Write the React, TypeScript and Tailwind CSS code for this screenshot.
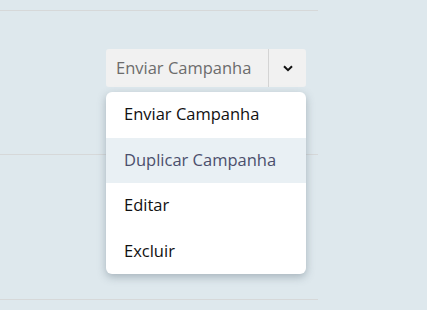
// Campaign actions dropdown — open state

const items = ['Enviar Campanha', 'Duplicar Campanha', 'Editar', 'Excluir'];

export default function App() {
  return (
    <div
      className="w-[427px] h-[310px] bg-[#dee8ed] overflow-hidden"
      style={{ fontFamily: '"Open Sans", "Noto Sans", sans-serif' }}
    >
      <div className="w-[318px] h-px bg-[#d6d8d9] mt-[10px]" />

      <div className="h-[143px] pt-[38px] pl-[106px]">
        <div className="relative w-[200px]">
          <div className="flex h-[38px] bg-[#f1f1f1] rounded-[3px]">
            <div className="flex-1 flex items-center pl-[10px] text-[16.5px] text-[#6c6c6c] border-r border-[#d4d4d4]">
              Enviar Campanha
            </div>
            <div className="w-[37px] flex items-center justify-center">
              <svg width="10" height="7" viewBox="0 0 10 7" fill="none">
                <path d="M1 1.2 L5 5.2 L9 1.2" stroke="#111" strokeWidth="2" />
              </svg>
            </div>
          </div>

          <ul className="absolute left-0 top-[43px] w-[200px] bg-white rounded-[6px] shadow-[0_3px_8px_rgba(60,80,95,0.35)] overflow-hidden z-10">
            {items.map((label, i) => (
              <li
                key={label}
                className={
                  i === 1
                    ? 'h-[45.5px] flex items-center pl-[18px] text-[16.5px] bg-[#e9f0f4] text-[#4b4f6c]'
                    : 'h-[45.5px] flex items-center pl-[18px] text-[16.5px] text-[#111]'
                }
              >
                {label}
              </li>
            ))}
          </ul>
        </div>
      </div>

      <div className="w-[318px] h-px bg-[#d6d8d9]" />
      <div className="h-[144px]" />
      <div className="w-[318px] h-px bg-[#d6d8d9]" />
    </div>
  );
}
